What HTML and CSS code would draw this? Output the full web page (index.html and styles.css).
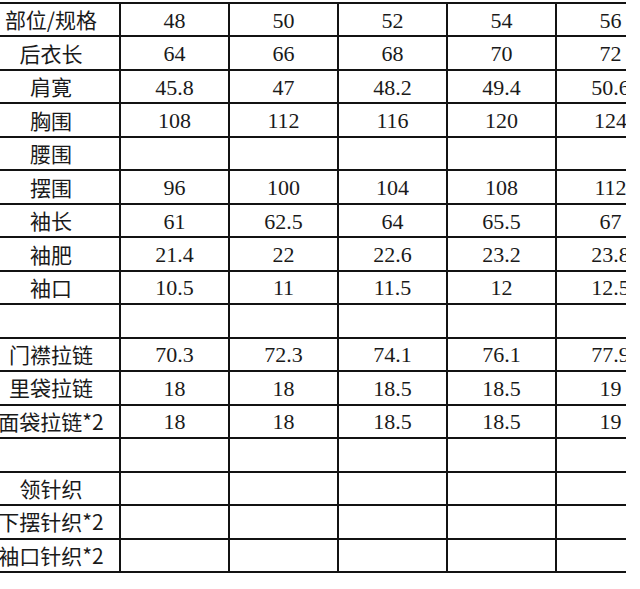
FILE: index.html
```html
<!DOCTYPE html>
<html lang="en">
<head>
<meta charset="utf-8">
<title>尺码表</title>
<link rel="stylesheet" href="styles.css">
</head>
<body>
<div class="sheet">
  <table class="sizes">
    <colgroup>
      <col class="c-label"><col class="c-num"><col class="c-num"><col class="c-num"><col class="c-num"><col class="c-num">
    </colgroup>
    <tbody>
      <tr><th lang="zh-CN">部位/规格</th><td>48</td><td>50</td><td>52</td><td>54</td><td>56</td></tr>
      <tr><th lang="zh-CN">后衣长</th><td>64</td><td>66</td><td>68</td><td>70</td><td>72</td></tr>
      <tr><th lang="zh-CN">肩寛</th><td>45.8</td><td>47</td><td>48.2</td><td>49.4</td><td>50.6</td></tr>
      <tr><th lang="zh-CN">胸围</th><td>108</td><td>112</td><td>116</td><td>120</td><td>124</td></tr>
      <tr><th lang="zh-CN">腰围</th><td></td><td></td><td></td><td></td><td></td></tr>
      <tr><th lang="zh-CN">摆围</th><td>96</td><td>100</td><td>104</td><td>108</td><td>112</td></tr>
      <tr><th lang="zh-CN">袖长</th><td>61</td><td>62.5</td><td>64</td><td>65.5</td><td>67</td></tr>
      <tr><th lang="zh-CN">袖肥</th><td>21.4</td><td>22</td><td>22.6</td><td>23.2</td><td>23.8</td></tr>
      <tr><th lang="zh-CN">袖口</th><td>10.5</td><td>11</td><td>11.5</td><td>12</td><td>12.5</td></tr>
      <tr><th></th><td></td><td></td><td></td><td></td><td></td></tr>
      <tr><th lang="zh-CN">门襟拉链</th><td>70.3</td><td>72.3</td><td>74.1</td><td>76.1</td><td>77.9</td></tr>
      <tr><th lang="zh-CN">里袋拉链</th><td>18</td><td>18</td><td>18.5</td><td>18.5</td><td>19</td></tr>
      <tr><th lang="zh-CN">面袋拉链*2</th><td>18</td><td>18</td><td>18.5</td><td>18.5</td><td>19</td></tr>
      <tr><th></th><td></td><td></td><td></td><td></td><td></td></tr>
      <tr><th lang="zh-CN">领针织</th><td></td><td></td><td></td><td></td><td></td></tr>
      <tr><th lang="zh-CN">下摆针织*2</th><td></td><td></td><td></td><td></td><td></td></tr>
      <tr><th lang="zh-CN">袖口针织*2</th><td></td><td></td><td></td><td></td><td></td></tr>
    </tbody>
  </table>
</div>
</body>
</html>
```

FILE: styles.css
```css
html, body {
  margin: 0;
  padding: 0;
  background: #ffffff;
}

.sheet {
  width: 626px;
  overflow: hidden;
  padding-top: 2px;
}

.sizes {
  margin-left: -19px;
  border-collapse: collapse;
  table-layout: fixed;
  width: 683px;
  color: #1a1a1a;
}

.c-label { width: 138px; }
.c-num { width: 109px; }

.sizes tr { height: 33.47px; }

.sizes th,
.sizes td {
  border: 2px solid #131313;
  padding: 0;
  text-align: center;
  vertical-align: middle;
  white-space: nowrap;
  overflow: visible;
}

.sizes th {
  font-family: "Noto Sans CJK SC", "Noto Sans", sans-serif;
  font-weight: 400;
  font-size: 21px;
  line-height: 1;
}

.sizes td {
  font-family: "Liberation Serif", "Times New Roman", serif;
  font-size: 22px;
  line-height: 1;
  padding-top: 2px;
}
```
